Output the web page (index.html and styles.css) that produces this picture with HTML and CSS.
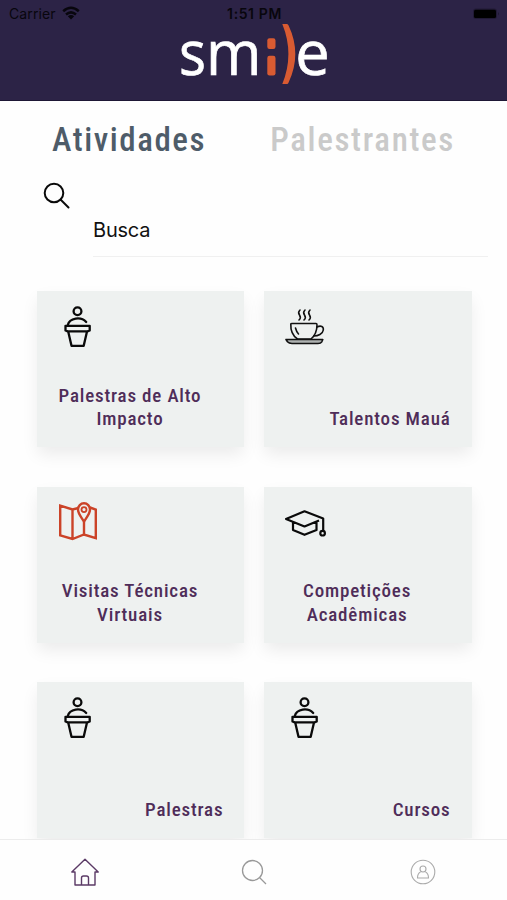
FILE: index.html
```html
<!DOCTYPE html>
<html lang="pt-BR">
<head>
<meta charset="utf-8">
<title>Smile</title>
<link rel="stylesheet" href="styles.css">
</head>
<body>
<svg class="defs" aria-hidden="true">
  <symbol id="podium" viewBox="0 0 42 42">
    <g fill="none" stroke="#0a0a0a" stroke-width="2.3" stroke-linejoin="round" stroke-linecap="round">
      <circle cx="20.500" cy="6.200" r="3.900"/>
      <path d="M10.800 20C12.500 12.800 24 11.200 29.200 17"/>
      <path d="M8.500 20.800H32.700V25.500L30.500 26.300H10.700L8.500 25.500ZM11.200 26.500L14.500 40.800H26.700L30 26.500"/>
    </g>
  </symbol>
</svg>
<div class="app">
  <header class="header">
    <div class="status">
      <div class="carrier"><span>Carrier</span>
        <svg width="18" height="14" viewBox="0 0 18 14"><g fill="none" stroke="#08060d" stroke-width="2.500"><path d="M1.200 5.200Q9-1.600 16.800 5.200M4 8.500Q9 4.200 14 8.500"/></g><path d="M5.800 10.300Q9 7.800 12.200 10.300L9 13.500Z" fill="#08060d"/></svg>
      </div>
      <div class="clock">1:51 PM</div>
      <div class="battery"><svg width="28" height="12" viewBox="0 0 28 12"><rect x="1" y=".5" width="24" height="10.500" rx="3" fill="#211a35"/><rect x="2" y="1.700" width="22" height="8.300" rx="1.500" fill="#000"/><path d="M26.200 4Q27.500 5.700 26.200 7.500Z" fill="#171126"/></svg></div>
    </div>
    <svg class="logo" width="154" height="68" viewBox="176 20 154 68">
      <text class="logo-text" x="178" y="75" textLength="27" lengthAdjust="spacingAndGlyphs">s</text>
      <text class="logo-text" x="205" y="75" textLength="55.500" lengthAdjust="spacingAndGlyphs">m</text>
      <rect x="266.300" y="38.300" width="8.200" height="10.700" rx="2.200" fill="#d95b32"/>
      <rect x="266.300" y="55.700" width="8.200" height="19.800" rx="2.200" fill="#d95b32"/>
      <path d="M281.300 24H286Q287 24 287.600 25.500Q301 54 287.600 82.500Q287 84 286 84H281.300Q293.500 54 281.300 24Z" fill="#d95b32"/>
      <text class="logo-text" x="294.200" y="75" textLength="34.500" lengthAdjust="spacingAndGlyphs">e</text>
    </svg>
  </header>
  <nav class="tabs">
    <span class="tab tab-active">Atividades</span>
    <span class="tab">Palestrantes</span>
  </nav>
  <section class="search">
    <svg class="search-icon" width="28" height="28" viewBox="0 0 28 28"><g fill="none" stroke="#0a0a0a" stroke-width="2"><circle cx="11" cy="11" r="9.300"/><path d="M17.500 17.500L25.500 25.500" stroke-linecap="round"/></g></svg>
    <div class="field">Busca</div>
  </section>
  <main class="cards">
    <article class="card"><svg class="icon" viewBox="0 0 42 42"><use href="#podium"/></svg><h2 class="label">Palestras de Alto<br>Impacto</h2></article>
    <article class="card"><svg class="icon" viewBox="0 0 42 42"><g fill="none" stroke="#111" stroke-width="1.600" stroke-linecap="round" stroke-linejoin="round"><path d="M16 5q-2.400 2.200-.5 5t-.5 5M21 5q-2.400 2.200-.5 5t-.5 5M26 5q-2.400 2.200-.5 5t-.5 5"/><path d="M6.800 19Q6.800 18.500 8 18.500H32Q33 18.500 33 20C33 26 30.500 31 27 34H13.500C9 31 6.500 25.500 6.800 19Z"/><path d="M33 22C37 20 39.800 21.500 39.300 25C38.800 29 34 31 29.800 31M11.500 23Q12.500 27 14.500 29"/><path d="M2 34.500H38.800L37.800 36.800Q36.800 38.500 34 38.500H8Q5 38.500 3.500 36.800Z" fill="#aeb2b1"/></g></svg><h2 class="label label-single">Talentos Mauá</h2></article>
    <article class="card"><svg class="icon" viewBox="0 0 42 42"><g fill="none" stroke="#cb4328" stroke-width="2.400"><path d="M21.500 7L15.500 8.500L3.200 4.700V34.300L15.500 38L27 33.500L38.800 37.200V8.500L33 6.500M15.500 8.500V38M27 20.500V33.500"/><path d="M27 20.500C24.500 16.500 21 13 21 8.600A6 6.300 0 0 1 33 8.600C33 13 29.500 16.500 27 20.500Z"/><circle cx="27" cy="8.600" r="2.500" stroke-width="1.800"/></g></svg><h2 class="label">Visitas Técnicas<br>Virtuais</h2></article>
    <article class="card"><svg class="icon" viewBox="0 0 42 42"><g fill="none" stroke="#0a0a0a" stroke-width="2.200" stroke-linejoin="round"><path d="M35 19.500L20.500 25.500L2 18L20.500 10.300L39.200 17.500V30M9 21.500V29L20.500 33.800L32.500 29V21"/><circle cx="38.600" cy="32.200" r="2.300"/></g></svg><h2 class="label">Competições<br>Acadêmicas</h2></article>
    <article class="card"><svg class="icon" viewBox="0 0 42 42"><use href="#podium"/></svg><h2 class="label label-single">Palestras</h2></article>
    <article class="card"><svg class="icon" viewBox="0 0 42 42"><use href="#podium"/></svg><h2 class="label label-single">Cursos</h2></article>
  </main>
  <nav class="bottom">
    <span class="item"><svg width="28" height="28" viewBox="0 0 28 28"><path d="M4 14H.8L14 1.300L27.200 14H24V27H4ZM10.500 27V20Q10.500 18 12.500 18H15.500Q17.500 18 17.500 20V27" fill="none" stroke="#5b3a66" stroke-width="1.400" stroke-linejoin="round"/></svg></span>
    <span class="item"><svg width="26" height="26" viewBox="0 0 26 26"><g fill="none" stroke="#999" stroke-width="1.300"><circle cx="11.500" cy="11.500" r="10"/><path d="M18.500 18.500L25 25"/></g></svg></span>
    <span class="item"><svg width="26" height="26" viewBox="0 0 26 26"><g fill="none" stroke="#aaa" stroke-width="1.100"><circle cx="13" cy="13" r="11.800"/><circle cx="13" cy="10" r="3"/><path d="M10.500 13Q7.500 14.500 7.500 19H18.500Q18.500 14.500 15.500 13"/></g></svg></span>
  </nav>
</div>
</body>
</html>
```
FILE: styles.css
```css
* { box-sizing: border-box; }
body { margin: 0; background: #fff; font-family: Roboto, "Liberation Sans", sans-serif; }
.defs { position: absolute; width: 0; height: 0; }
.app { width: 507px; height: 900px; display: flex; flex-direction: column; overflow: hidden; background: #fefefe; }

.header { flex: none; height: 101px; background: #2c2346; border-bottom: 1px solid #1e1735; display: flex; flex-direction: column; align-items: center; }
.status { width: 100%; height: 20px; padding: 6px 7px 0 9px; display: grid; grid-template-columns: 1fr auto 1fr; font: 14px/16px Inter, sans-serif; color: #08060d; }
.carrier { display: flex; gap: 6px; letter-spacing: .1px; }
.clock { font-weight: 600; letter-spacing: .6px; }
.battery { display: flex; justify-content: flex-end; padding-top: 2px; }
.logo { display: block; overflow: visible; }
.logo-text { font: 63px "Open Sans", sans-serif; fill: #fff; stroke: #fff; stroke-width: .7px; }

.tabs { flex: none; height: 76px; padding: 19px 52px 0 52px; display: flex; justify-content: space-between; }
.tab { font-size: 33px; line-height: 40px; font-weight: 500; font-stretch: 75%; letter-spacing: 1.650px; color: #cacaca; }
.tab-active { color: #4e5c69; letter-spacing: 1.550px; }

.search { flex: none; height: 81px; padding: 5px 19px 0 43px; display: flex; }
.search-icon { flex: none; margin-right: 22px; }
.field { flex: 1; margin-top: 33px; height: 42px; border-bottom: 1px solid #f0f0f0; font: 20px/30px Inter, sans-serif; letter-spacing: -.200px; color: #111; }

.cards { flex: 1; min-height: 0; overflow: hidden; padding: 33px 35px 0 36.600px; display: grid; grid-template-columns: 207.800px 208px; grid-auto-rows: 156px; gap: 39.500px 19.200px; }
.card { background: #eef1f0; padding: 14px 21px 16.500px 0; display: flex; flex-direction: column; justify-content: space-between; box-shadow: 0 8px 16px -1px rgba(0,0,0,.08); }
.icon { display: block; width: 42px; height: 42px; margin-left: 20px; }
.label { margin: 0; font-size: 19px; line-height: 23.500px; font-weight: 500; font-stretch: 75%; letter-spacing: .820px; text-align: center; color: #4f2d59; }
.label-single { text-align: right; }

.bottom { flex: none; height: 61px; border-top: 1px solid #ececec; background: #fefefe; display: grid; grid-template-columns: repeat(3, 1fr); }
.item { display: flex; align-items: center; justify-content: center; padding-top: 4px; }
```
